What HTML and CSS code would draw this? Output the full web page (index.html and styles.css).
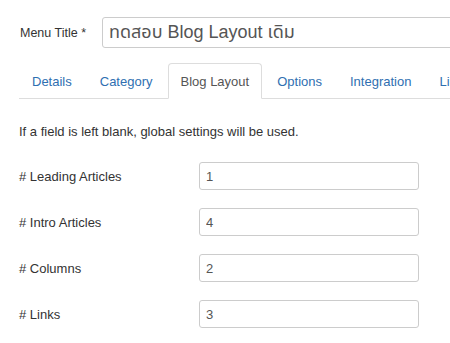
FILE: index.html
```html
<!DOCTYPE html>
<html>
<head>
<meta charset="utf-8">
<link rel="stylesheet" href="styles.css">
</head>
<body>
<div class="page">
  <div class="title-row">
    <label class="title-label">Menu Title *</label>
    <input class="title-input" type="text" value="ทดสอบ Blog Layout เดิม">
  </div>
  <ul class="tabs">
    <li class="tab"><a>Details</a></li>
    <li class="tab"><a>Category</a></li>
    <li class="tab active"><a>Blog Layout</a></li>
    <li class="tab"><a>Options</a></li>
    <li class="tab"><a>Integration</a></li>
    <li class="tab"><a>Link Type</a></li>
  </ul>
  <p class="intro">If a field is left blank, global settings will be used.</p>
  <div class="fields">
    <div class="field"><label class="field-label"># Leading Articles</label><input class="field-input" type="text" value="1"></div>
    <div class="field"><label class="field-label"># Intro Articles</label><input class="field-input" type="text" value="4"></div>
    <div class="field"><label class="field-label"># Columns</label><input class="field-input" type="text" value="2"></div>
    <div class="field"><label class="field-label"># Links</label><input class="field-input" type="text" value="3"></div>
  </div>
</div>
</body>
</html>
```
FILE: styles.css
```css
html, body {
  margin: 0;
  padding: 0;
  background: #fff;
  overflow: hidden;
  width: 450px;
  height: 343px;
}
.page {
  padding: 17px 0 0 19px;
  font-family: "Liberation Sans", Arial, "Noto Sans Thai", "DejaVu Sans", sans-serif;
  font-size: 13px;
  color: #333;
}
.title-row {
  display: flex;
  align-items: center;
  height: 31px;
}
.title-label {
  flex: none;
  width: 83px;
  padding-left: 1px;
  box-sizing: border-box;
  font-size: 12.5px;
  white-space: nowrap;
  color: #333;
}
.title-input {
  flex: none;
  width: 420px;
  height: 31px;
  box-sizing: border-box;
  border: 1px solid #ccc;
  border-radius: 3px;
  padding: 0 6px;
  font-family: "Liberation Sans", Arial, "Noto Sans Thai", "DejaVu Sans", sans-serif;
  font-size: 18px;
  color: #555;
  outline: none;
  margin: 0;
}
.tabs {
  list-style: none;
  margin: 15px 0 0 0;
  padding: 0;
  display: flex;
  border-bottom: 1px solid #ddd;
  white-space: nowrap;
}
.tab {
  flex: none;
  margin-right: 2px;
  margin-bottom: -1px;
}
.tab a {
  display: block;
  height: 36px;
  line-height: 35px;
  padding: 0 12px;
  border: 1px solid transparent;
  border-bottom: none;
  border-radius: 4px 4px 0 0;
  color: #2f6fb1;
  box-sizing: border-box;
}
.tab.active a {
  color: #555;
  background: #fff;
  border-color: #ddd;
  border-bottom: 1px solid #fff;
}
.intro {
  margin: 25px 0 0 0;
  line-height: 16px;
  font-size: 13px;
}
.fields {
  display: flex;
  flex-direction: column;
  gap: 18px;
  margin-top: 22px;
}
.field {
  display: flex;
  align-items: center;
  height: 28px;
}
.field-label {
  flex: none;
  width: 180px;
  font-size: 13px;
}
.field-input {
  flex: none;
  width: 220px;
  height: 28px;
  box-sizing: border-box;
  border: 1px solid #ccc;
  border-radius: 3px;
  padding: 0 6px;
  margin: 0;
  font-family: "Liberation Sans", Arial, sans-serif;
  font-size: 13px;
  color: #555;
  outline: none;
}
```
